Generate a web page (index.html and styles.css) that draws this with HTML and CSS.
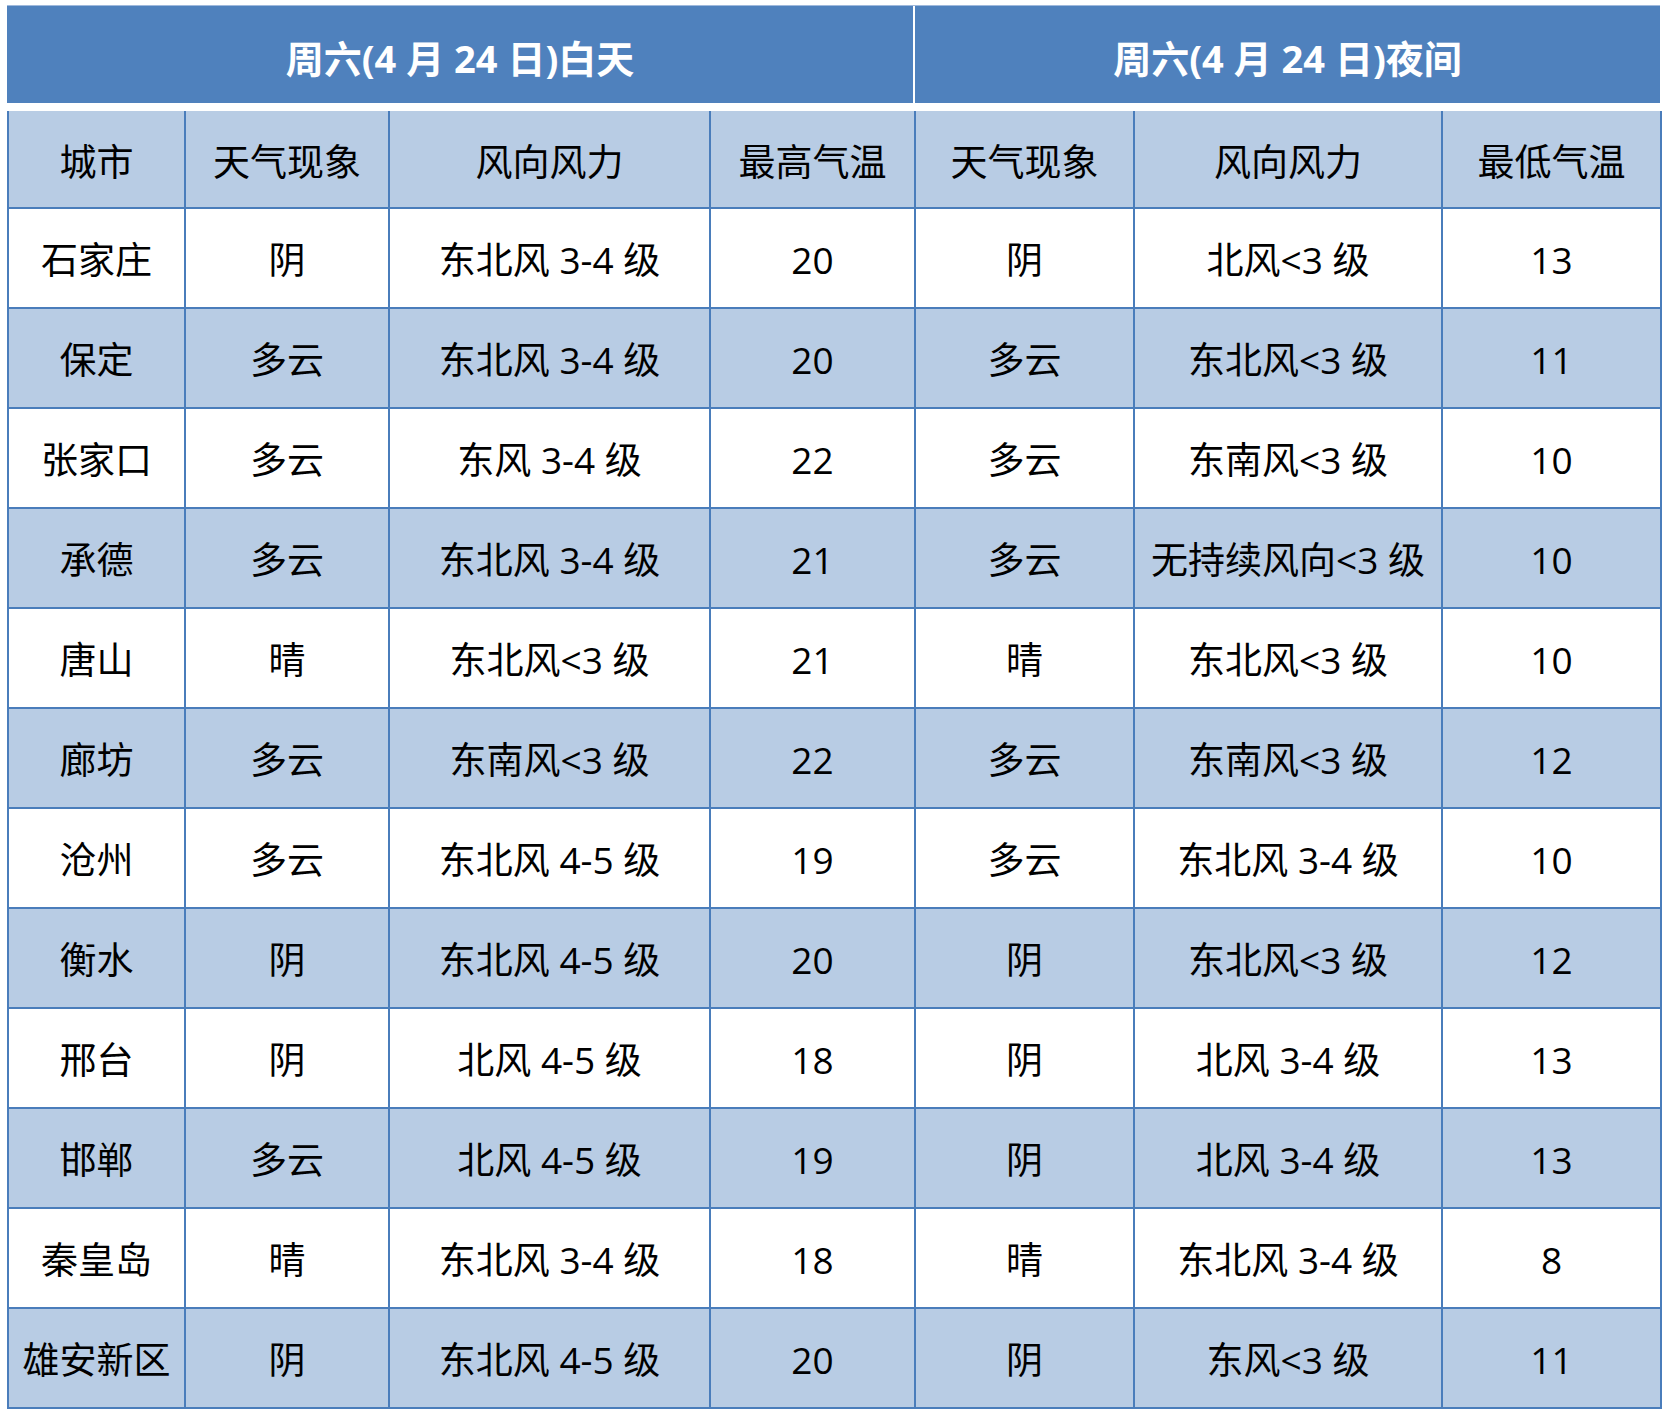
FILE: index.html
```html
<!DOCTYPE html>
<html lang="zh-CN">
<head>
<meta charset="utf-8">
<title>河北天气预报</title>
<link rel="stylesheet" href="styles.css">
</head>
<body>
<div class="wrap">
  <div class="title">
    <div class="title-cell day">周六(4 月 24 日)白天</div>
    <div class="title-cell night">周六(4 月 24 日)夜间</div>
  </div>
  <table class="grid">
    <colgroup>
      <col class="c1"><col class="c2"><col class="c3"><col class="c4"><col class="c5"><col class="c6"><col class="c7">
    </colgroup>
    <thead>
      <tr class="head"><th>城市</th><th>天气现象</th><th>风向风力</th><th>最高气温</th><th>天气现象</th><th>风向风力</th><th>最低气温</th></tr>
    </thead>
    <tbody>
      <tr><td>石家庄</td><td>阴</td><td>东北风 3-4 级</td><td>20</td><td>阴</td><td>北风&lt;3 级</td><td>13</td></tr>
      <tr class="alt"><td>保定</td><td>多云</td><td>东北风 3-4 级</td><td>20</td><td>多云</td><td>东北风&lt;3 级</td><td>11</td></tr>
      <tr><td>张家口</td><td>多云</td><td>东风 3-4 级</td><td>22</td><td>多云</td><td>东南风&lt;3 级</td><td>10</td></tr>
      <tr class="alt"><td>承德</td><td>多云</td><td>东北风 3-4 级</td><td>21</td><td>多云</td><td>无持续风向&lt;3 级</td><td>10</td></tr>
      <tr><td>唐山</td><td>晴</td><td>东北风&lt;3 级</td><td>21</td><td>晴</td><td>东北风&lt;3 级</td><td>10</td></tr>
      <tr class="alt"><td>廊坊</td><td>多云</td><td>东南风&lt;3 级</td><td>22</td><td>多云</td><td>东南风&lt;3 级</td><td>12</td></tr>
      <tr><td>沧州</td><td>多云</td><td>东北风 4-5 级</td><td>19</td><td>多云</td><td>东北风 3-4 级</td><td>10</td></tr>
      <tr class="alt"><td>衡水</td><td>阴</td><td>东北风 4-5 级</td><td>20</td><td>阴</td><td>东北风&lt;3 级</td><td>12</td></tr>
      <tr><td>邢台</td><td>阴</td><td>北风 4-5 级</td><td>18</td><td>阴</td><td>北风 3-4 级</td><td>13</td></tr>
      <tr class="alt"><td>邯郸</td><td>多云</td><td>北风 4-5 级</td><td>19</td><td>阴</td><td>北风 3-4 级</td><td>13</td></tr>
      <tr><td>秦皇岛</td><td>晴</td><td>东北风 3-4 级</td><td>18</td><td>晴</td><td>东北风 3-4 级</td><td>8</td></tr>
      <tr class="alt"><td>雄安新区</td><td>阴</td><td>东北风 4-5 级</td><td>20</td><td>阴</td><td>东风&lt;3 级</td><td>11</td></tr>
    </tbody>
  </table>
</div>
</body>
</html>
```
FILE: styles.css
```css
html, body {
  margin: 0;
  padding: 0;
  background: #ffffff;
}
body {
  font-family: "Open Sans", "Noto Sans CJK SC", sans-serif;
  color: #000000;
}
.wrap {
  padding: 5px 0 0 7px;
  width: 1653px;
}
.title {
  display: flex;
  height: 98px;
  background: #4f81bd;
  border-top: 1px solid #9fb9dc;
  box-sizing: border-box;
}
.title-cell {
  display: flex;
  align-items: center;
  justify-content: center;
  color: #ffffff;
  font-weight: 700;
  font-size: 38px;
  padding-top: 4px;
  box-sizing: border-box;
  font-family: "Open Sans", "Noto Sans CJK SC", sans-serif;
}
.day {
  width: 908px;
  border-right: 2px solid #ffffff;
}
.night {
  flex: 1;
}
.grid {
  margin-top: 8px;
  border-collapse: collapse;
  table-layout: fixed;
  width: 1653px;
}
.c1 { width: 177px; }
.c2 { width: 204px; }
.c3 { width: 321px; }
.c4 { width: 205px; }
.c5 { width: 219px; }
.c6 { width: 308px; }
.c7 { width: 219px; }
.grid th, .grid td {
  border: 2px solid #4a7dbb;
  text-align: center;
  vertical-align: middle;
  font-size: 37px;
  font-weight: 400;
  padding: 5px 0 0;
  white-space: nowrap;
  line-height: 1.2;
}
.grid thead th {
  border-top: none;
  padding-top: 6px;
}
.head {
  height: 97px;
  background: #b8cce4;
}
.grid tbody tr {
  height: 100px;
  background: #ffffff;
}
.grid tbody tr.alt {
  background: #b8cce4;
}
```
